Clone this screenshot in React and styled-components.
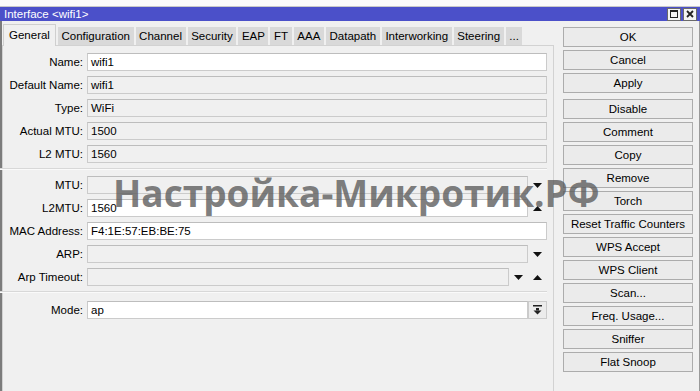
import React from "react";
import styled, { createGlobalStyle } from "styled-components";

const GlobalStyle = createGlobalStyle`
  html, body { margin: 0; padding: 0; background: #f0f0f0; }
  body { font-family: "Liberation Sans", Arial, sans-serif; }
`;

// ---------------------------------------------
// Window chrome
// ---------------------------------------------
const Window = styled.div`
  position: relative;
  width: 700px;
  height: 391px;
  overflow: hidden;
  display: flex;
  flex-direction: column;
  background: #f0f0f0;
  font-family: "Liberation Sans", Arial, sans-serif;
  font-size: 11.5px;
  color: #000;
`;
const TopStrip = styled.div`
  height: 6px;
  background: #fbfbfb;
  border-bottom: 1px solid #c9c9c9;
`;
const TitleBar = styled.div`
  height: 14px;
  background: #4b50c9;
  color: #fff;
  display: flex;
  align-items: center;
  padding-left: 4px;
`;
const TitleText = styled.div`
  line-height: 14px;
`;
const TitleButtons = styled.div`
  margin-left: auto;
  display: flex;
  gap: 2px;
  padding-right: 3px;
`;
const WinButton = styled.div`
  width: 12px;
  height: 11px;
  background: #f4f4f4;
  border: 1px solid #6a6a6a;
  display: flex;
  align-items: center;
  justify-content: center;
`;
const Body = styled.div`
  flex: 1;
  display: flex;
  border-left: 2px solid #7c7c7c;
  border-right: 1px solid #9a9a9a;
`;

// ---------------------------------------------
// Tabs + panel
// ---------------------------------------------
const Main = styled.div`
  width: 552px;
  display: flex;
  flex-direction: column;
`;
const TabBar = styled.div`
  height: 24px;
  display: flex;
  align-items: flex-end;
  gap: 2px;
  padding-left: 1px;
  position: relative;
  z-index: 1;
`;
const Tab = styled.div`
  height: ${(p) => (p.$active ? "21px" : "18px")};
  line-height: ${(p) => (p.$active ? "20px" : "18px")};
  padding: 0 ${(p) => (p.$active ? "5px" : "3.6px")};
  background: ${(p) => (p.$active ? "#f0f0f0" : "#d9d9d9")};
  border: ${(p) => (p.$active ? "1px solid #cfcfcf" : "none")};
  border-bottom: none;
  margin-bottom: ${(p) => (p.$active ? "-1px" : "0")};
  white-space: nowrap;
`;
const Panel = styled.div`
  flex: 1;
  border: 1px solid #d2d2d2;
  border-bottom: none;
  padding: 7px 6px 0 0;
`;
const Row = styled.div`
  display: flex;
  align-items: center;
  height: 18px;
  margin-bottom: 5px;
`;
const Label = styled.div`
  width: 80px;
  flex: none;
  text-align: right;
  margin-right: 4px;
  white-space: nowrap;
`;
const Field = styled.div`
  flex: 1;
  height: 16px;
  line-height: 16px;
  padding-left: 3px;
  background: ${(p) => (p.$enabled ? "#ffffff" : "#f0f0f0")};
  border: 1px solid #cbcbcb;
  border-top-color: #bdbdbd;
  white-space: nowrap;
`;
const ArrowCell = styled.div`
  width: 19px;
  flex: none;
  display: flex;
  align-items: center;
  justify-content: center;
`;
const DropButton = styled.div`
  width: 17px;
  height: 16px;
  flex: none;
  border: 1px solid #cbcbcb;
  background: #ececec;
  display: flex;
  align-items: center;
  justify-content: center;
`;
const Divider = styled.div`
  height: 0;
  border-top: 1px solid #d8d8d8;
  border-bottom: 1px solid #fafafa;
  margin: 2px 0 ${(p) => (p.$last ? "8px" : "6px")} -3px;
`;

// ---------------------------------------------
// Side buttons
// ---------------------------------------------
const Side = styled.div`
  flex: 1;
  display: flex;
  flex-direction: column;
  gap: 3px;
  padding: 6px 0 0 9px;
`;
const Button = styled.div`
  width: 128px;
  height: 18px;
  line-height: 18px;
  text-align: center;
  background: #ebebeb;
  border: 1px solid #acacac;
  margin-top: ${(p) => (p.$spaced ? "3px" : "0")};
  white-space: nowrap;
`;

// watermark drawn over the form
const Watermark = styled.div`
  position: absolute;
  left: 113px;
  top: 169px;
  font-family: "Open Sans", "Liberation Sans", sans-serif;
  font-weight: 700;
  font-size: 37px;
  line-height: 48px;
  color: rgba(92, 92, 92, 0.8);
  white-space: nowrap;
  pointer-events: none;
`;

const Down = () => (
  <svg width="9" height="5" viewBox="0 0 9 5">
    <path d="M0 0H9L4.5 5Z" fill="#111" />
  </svg>
);
const Up = () => (
  <svg width="9" height="5" viewBox="0 0 9 5">
    <path d="M0 5H9L4.5 0Z" fill="#111" />
  </svg>
);
const DropIcon = () => (
  <svg width="9" height="10" viewBox="0 0 9 10">
    <rect x="0" y="0" width="9" height="1.5" fill="#222" />
    <rect x="3" y="3" width="3" height="2.5" fill="#222" />
    <path d="M0.5 5.5H8.5L4.5 9.5Z" fill="#222" />
  </svg>
);

const tabs = [
  "General",
  "Configuration",
  "Channel",
  "Security",
  "EAP",
  "FT",
  "AAA",
  "Datapath",
  "Interworking",
  "Steering",
  "...",
];

const buttons = [
  "OK",
  "Cancel",
  "Apply",
  "Disable",
  "Comment",
  "Copy",
  "Remove",
  "Torch",
  "Reset Traffic Counters",
  "WPS Accept",
  "WPS Client",
  "Scan...",
  "Freq. Usage...",
  "Sniffer",
  "Flat Snoop",
];

const topFields = [
  { label: "Name:", value: "wifi1", enabled: true },
  { label: "Default Name:", value: "wifi1" },
  { label: "Type:", value: "WiFi" },
  { label: "Actual MTU:", value: "1500" },
  { label: "L2 MTU:", value: "1560" },
];

function App() {
  return (
    <Window>
      <GlobalStyle />
      <TopStrip />
      <TitleBar>
        <TitleText>Interface &lt;wifi1&gt;</TitleText>
        <TitleButtons>
          <WinButton>
            <svg width="8" height="8" viewBox="0 0 8 8">
              <rect x="0.5" y="0.5" width="7" height="7" fill="none" stroke="#222" />
              <rect x="0.5" y="0.5" width="7" height="1.5" fill="#222" />
            </svg>
          </WinButton>
          <WinButton>
            <svg width="8" height="8" viewBox="0 0 8 8">
              <path d="M1 1L7 7M7 1L1 7" stroke="#222" strokeWidth="1.8" />
            </svg>
          </WinButton>
        </TitleButtons>
      </TitleBar>

      <Body>
        <Main>
          <TabBar>
            {tabs.map((t, i) => (
              <Tab key={t} $active={i === 0}>
                {t}
              </Tab>
            ))}
          </TabBar>
          <Panel>
            {topFields.map((f) => (
              <Row key={f.label}>
                <Label>{f.label}</Label>
                <Field $enabled={f.enabled}>{f.value}</Field>
              </Row>
            ))}
            <Divider />
            <Row>
              <Label>MTU:</Label>
              <Field />
              <ArrowCell>
                <Down />
              </ArrowCell>
            </Row>
            <Row>
              <Label>L2MTU:</Label>
              <Field $enabled>1560</Field>
              <ArrowCell>
                <Up />
              </ArrowCell>
            </Row>
            <Row>
              <Label>MAC Address:</Label>
              <Field $enabled>F4:1E:57:EB:BE:75</Field>
            </Row>
            <Row>
              <Label>ARP:</Label>
              <Field />
              <ArrowCell>
                <Down />
              </ArrowCell>
            </Row>
            <Row>
              <Label>Arp Timeout:</Label>
              <Field />
              <ArrowCell>
                <Down />
              </ArrowCell>
              <ArrowCell>
                <Up />
              </ArrowCell>
            </Row>
            <Divider $last />
            <Row>
              <Label>Mode:</Label>
              <Field $enabled>ap</Field>
              <DropButton>
                <DropIcon />
              </DropButton>
            </Row>
          </Panel>
        </Main>

        <Side>
          {buttons.map((b) => (
            <Button key={b} $spaced={b === "Disable"}>
              {b}
            </Button>
          ))}
        </Side>
      </Body>

      <Watermark>Настройка-Микротик.РФ</Watermark>
    </Window>
  );
}

export default App;
